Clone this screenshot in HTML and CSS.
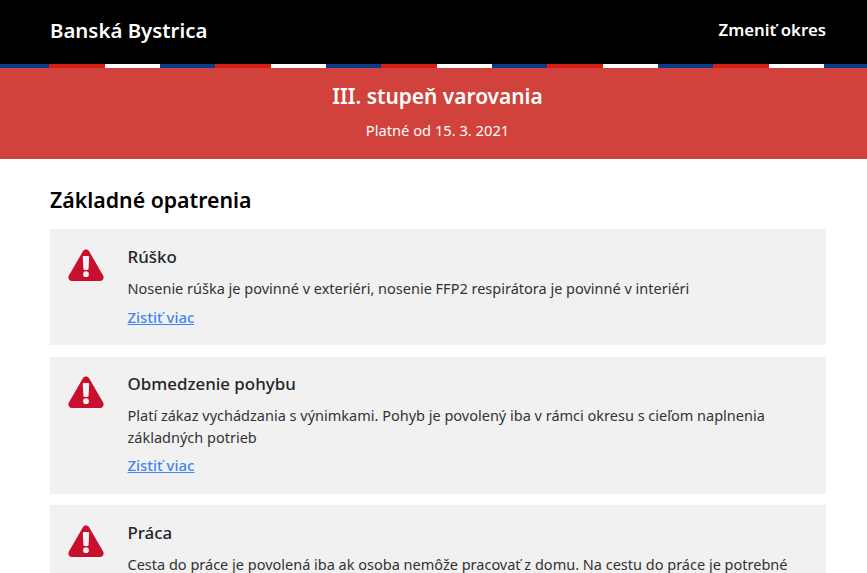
FILE: index.html
```html
<!DOCTYPE html>
<html lang="sk">
<head>
<meta charset="utf-8">
<title>Banská Bystrica</title>
<link rel="stylesheet" href="styles.css">
</head>
<body>
<header class="topbar">
  <a class="brand" href="#">Banská Bystrica</a>
  <a class="change" href="#">Zmeniť okres</a>
</header>
<div class="stripe"></div>
<section class="level">
  <h1>III. stupeň varovania</h1>
  <p>Platné od 15. 3. 2021</p>
</section>
<main class="content">
  <h2>Základné opatrenia</h2>
  <article class="card">
    <svg class="icon" viewBox="0 0 36 32"><path fill="#c8102e" fill-rule="evenodd" d="M14.900 2.300c1.400-2.400 4.800-2.400 6.200 0l14 24.300c1.400 2.400-.3 5.400-3.100 5.400H4c-2.800 0-4.500-3-3.100-5.400zM15.700 7c-.5 0-.9.400-.9.900l.6 11.800c0 .7.500 1.200 1.200 1.200h2.800c.7 0 1.200-.5 1.200-1.200l.6-11.800c0-.5-.4-.9-.9-.9zM18 22.300a2.900 2.900 0 1 0 0 5.800 2.900 2.900 0 0 0 0-5.800z"/></svg>
    <div class="body">
      <h3>Rúško</h3>
      <p>Nosenie rúška je povinné v exteriéri, nosenie FFP2 respirátora je povinné v interiéri</p>
      <a href="#">Zistiť viac</a>
    </div>
  </article>
  <article class="card">
    <svg class="icon" viewBox="0 0 36 32"><path fill="#c8102e" fill-rule="evenodd" d="M14.900 2.300c1.400-2.400 4.800-2.400 6.200 0l14 24.300c1.400 2.400-.3 5.400-3.100 5.400H4c-2.800 0-4.500-3-3.100-5.400zM15.700 7c-.5 0-.9.400-.9.900l.6 11.800c0 .7.500 1.200 1.200 1.200h2.800c.7 0 1.200-.5 1.200-1.200l.6-11.800c0-.5-.4-.9-.9-.9zM18 22.300a2.900 2.900 0 1 0 0 5.800 2.900 2.900 0 0 0 0-5.800z"/></svg>
    <div class="body">
      <h3>Obmedzenie pohybu</h3>
      <p>Platí zákaz vychádzania s výnimkami. Pohyb je povolený iba v rámci okresu s cieľom naplnenia základných potrieb</p>
      <a href="#">Zistiť viac</a>
    </div>
  </article>
  <article class="card">
    <svg class="icon" viewBox="0 0 36 32"><path fill="#c8102e" fill-rule="evenodd" d="M14.900 2.300c1.400-2.400 4.800-2.400 6.200 0l14 24.300c1.400 2.400-.3 5.400-3.100 5.400H4c-2.800 0-4.500-3-3.100-5.400zM15.700 7c-.5 0-.9.400-.9.900l.6 11.800c0 .7.500 1.200 1.200 1.200h2.800c.7 0 1.200-.5 1.200-1.200l.6-11.800c0-.5-.4-.9-.9-.9zM18 22.300a2.900 2.900 0 1 0 0 5.800 2.900 2.900 0 0 0 0-5.800z"/></svg>
    <div class="body">
      <h3>Práca</h3>
      <p>Cesta do práce je povolená iba ak osoba nemôže pracovať z domu. Na cestu do práce je potrebné</p>
    </div>
  </article>
</main>
</body>
</html>
```
FILE: styles.css
```css
* { box-sizing: border-box; }
html, body { margin: 0; height: 573px; overflow: hidden; }
body { font-family: "Noto Sans", sans-serif; background: #fff; color: #212529; }
.topbar {
  height: 64px; background: #000; padding: 0 41px 5px 50px;
  display: flex; justify-content: space-between; align-items: center;
}
.topbar a { color: #fff; text-decoration: none; }
.brand { font-size: 20.4px; font-weight: 600; }
.change { font-size: 16.8px; font-weight: 600; }
.stripe {
  height: 4px;
  background: linear-gradient(90deg,
    #0b3a8c 0, #0b3a8c 33.33%,
    #d31f14 33.33%, #d31f14 66.67%,
    #fff 66.67%, #fff 100%);
  background-size: 166px 4px;
  background-position: -6px 0;
}
.level { height: 91px; background: #d2423d; color: #fff; text-align: center; padding: 13px 0 0 8px; }
.level h1 { margin: 0; font-size: 20.9px; line-height: 30px; font-weight: 600; }
.level p { margin: 9px 0 0; font-size: 14.7px; line-height: 20px; }
.content { padding: 25.5px 41px 0 50px; }
.content h2 { margin: 0 0 14.8px; font-size: 21.3px; line-height: 30px; font-weight: 600; color: #000; }
.card { background: #f1f1f1; display: flex; padding: 15.500px 18px 17.500px 18px; margin-bottom: 11.5px; gap: 23.500px; }
.icon { width: 36px; height: 32px; flex: none; margin-top: 4px; }
.body h3 { margin: 0 0 9px; font-size: 16.9px; line-height: 24px; font-weight: 500; }
.body p { margin: 0 0 6px; font-size: 14.5px; line-height: 21.7px; color: #333; }
.body a { display: block; font-size: 14.9px; line-height: 22px; font-weight: 500; color: #4285f4; }
```
